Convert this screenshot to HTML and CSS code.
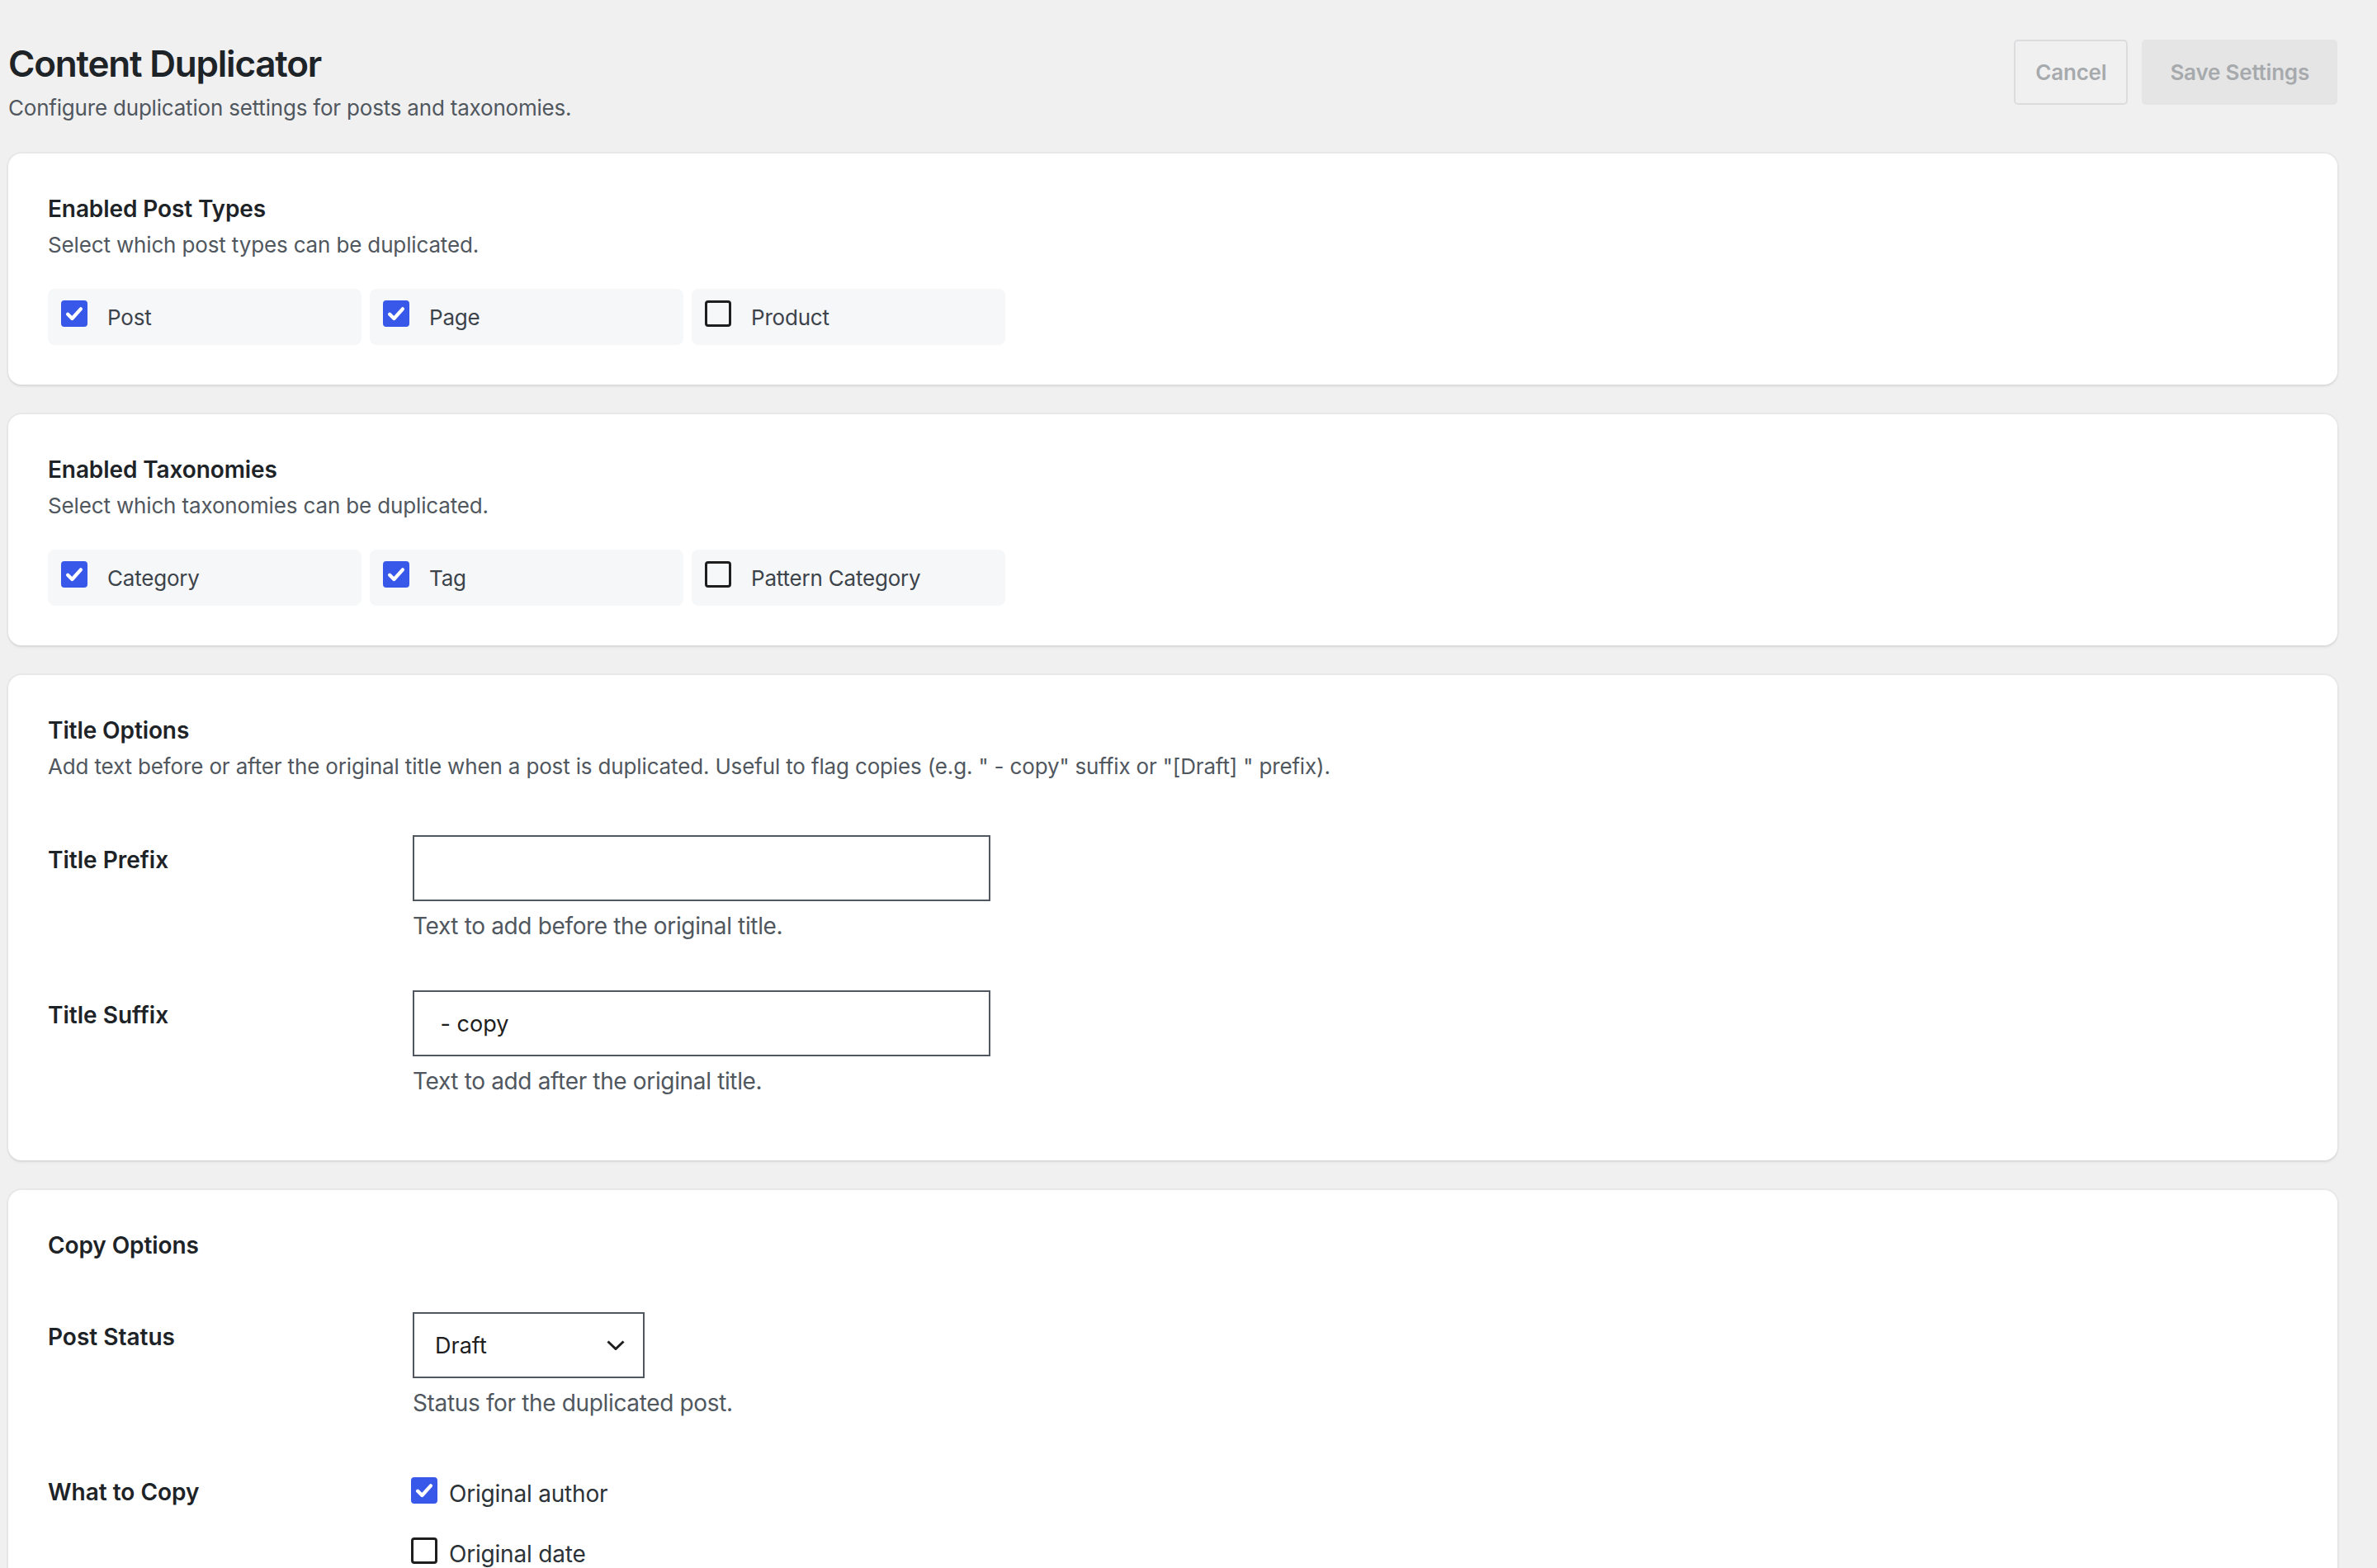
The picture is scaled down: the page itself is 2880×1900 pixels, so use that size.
FILE: index.html
```html
<!DOCTYPE html>
<html lang="en">
<head>
  <meta charset="UTF-8">
  <meta name="viewport" content="width=device-width, initial-scale=1.0">
  <title>Content Duplicator</title>
  <link rel="stylesheet" href="styles.css">
</head>
<body>
  <div class="wrap">
    <div class="page-header">
      <div>
        <h1 class="page-title">Content Duplicator</h1>
        <p class="page-desc">Configure duplication settings for posts and taxonomies.</p>
      </div>
      <div class="actions">
        <button class="btn btn-secondary" disabled>Cancel</button>
        <button class="btn btn-primary" disabled>Save Settings</button>
      </div>
    </div>

    <div class="card">
      <h2 class="card-title">Enabled Post Types</h2>
      <p class="card-desc">Select which post types can be duplicated.</p>
      <div class="choice-grid">
        <label class="choice">
          <span class="box checked"><svg viewBox="0 0 16 16"><path d="M3.8 8.4l2.8 2.8 5.6-6.2"/></svg></span>
          <span>Post</span>
        </label>
        <label class="choice">
          <span class="box checked"><svg viewBox="0 0 16 16"><path d="M3.8 8.4l2.8 2.8 5.6-6.2"/></svg></span>
          <span>Page</span>
        </label>
        <label class="choice">
          <span class="box"></span>
          <span>Product</span>
        </label>
      </div>
    </div>

    <div class="card">
      <h2 class="card-title">Enabled Taxonomies</h2>
      <p class="card-desc">Select which taxonomies can be duplicated.</p>
      <div class="choice-grid">
        <label class="choice">
          <span class="box checked"><svg viewBox="0 0 16 16"><path d="M3.8 8.4l2.8 2.8 5.6-6.2"/></svg></span>
          <span>Category</span>
        </label>
        <label class="choice">
          <span class="box checked"><svg viewBox="0 0 16 16"><path d="M3.8 8.4l2.8 2.8 5.6-6.2"/></svg></span>
          <span>Tag</span>
        </label>
        <label class="choice">
          <span class="box"></span>
          <span>Pattern Category</span>
        </label>
      </div>
    </div>

    <div class="card">
      <h2 class="card-title">Title Options</h2>
      <p class="card-desc">Add text before or after the original title when a post is duplicated. Useful to flag copies (e.g. " - copy" suffix or "[Draft] " prefix).</p>
      <div class="form-row">
        <label class="row-label">Title Prefix</label>
        <div class="row-field">
          <input class="text-input" type="text" value="">
          <p class="help">Text to add before the original title.</p>
        </div>
      </div>
      <div class="form-row">
        <label class="row-label">Title Suffix</label>
        <div class="row-field">
          <input class="text-input" type="text" value=" - copy">
          <p class="help">Text to add after the original title.</p>
        </div>
      </div>
    </div>

    <div class="card">
      <h2 class="card-title card-title-solo">Copy Options</h2>
      <div class="form-row">
        <label class="row-label">Post Status</label>
        <div class="row-field">
          <div class="select">
            <span>Draft</span>
            <svg class="chevron" viewBox="0 0 22 12"><path d="M1.5 1.5l9.5 9 9.5-9"/></svg>
          </div>
          <p class="help">Status for the duplicated post.</p>
        </div>
      </div>
      <div class="form-row">
        <label class="row-label">What to Copy</label>
        <div class="row-field">
          <label class="option">
            <span class="box checked"><svg viewBox="0 0 16 16"><path d="M3.8 8.4l2.8 2.8 5.6-6.2"/></svg></span>
            <span>Original author</span>
          </label>
          <label class="option">
            <span class="box"></span>
            <span>Original date</span>
          </label>
        </div>
      </div>
    </div>
  </div>
</body>
</html>
```

FILE: styles.css
```css
body {
  margin: 0;
  background-color: #f0f0f1;
  font-family: Inter, "Liberation Sans", sans-serif;
  color: #1d2327;
}

.wrap {
  padding: 0 48px 40px 10px;
}

.page-header {
  display: flex;
  justify-content: space-between;
  align-items: flex-start;
  padding-top: 47px;
  margin-bottom: 37px;
}

.page-title {
  margin: 0;
  font-size: 44px;
  line-height: 60px;
  font-weight: 600;
  letter-spacing: -1.2px;
  color: #1d2327;
}

.page-desc {
  margin: 6px 0 0;
  font-size: 26px;
  line-height: 36px;
  color: #50575e;
  letter-spacing: -0.2px;
}

.actions {
  display: flex;
  gap: 17px;
  padding-top: 1px;
}

.btn {
  height: 79px;
  border-radius: 5px;
  font-family: inherit;
  font-size: 26px;
  font-weight: 600;
  color: #a7aaad;
  letter-spacing: -0.2px;
}

.btn-secondary {
  padding: 0 24px;
  background: transparent;
  border: 2px solid #dcdcde;
}

.btn-primary {
  padding: 0 34px;
  background: #e5e5e6;
  border: none;
}

.card {
  background: #fff;
  border-radius: 16px;
  padding: 48px;
  margin-bottom: 36px;
  box-shadow: 0 0 0 2px rgba(0, 0, 0, 0.03), 0 3px 3px rgba(0, 0, 0, 0.05);
}

.card-title {
  margin: 0 0 6px;
  font-size: 28px;
  line-height: 39px;
  font-weight: 600;
  letter-spacing: -0.1px;
  color: #1d2327;
}

.card-title-solo {
  margin-bottom: 31px;
}

.card-desc {
  margin: 0 0 35px;
  font-size: 26px;
  line-height: 36px;
  color: #50575e;
  letter-spacing: -0.15px;
}

.choice-grid {
  display: flex;
  gap: 10px;
}

.choice {
  width: 380px;
  height: 68px;
  box-sizing: border-box;
  padding: 0 16px;
  display: flex;
  align-items: center;
  gap: 24px;
  background: #f6f7f9;
  border-radius: 8px;
  font-size: 26px;
  color: #3c434a;
  letter-spacing: -0.2px;
}

.box {
  flex: none;
  width: 32px;
  height: 32px;
  box-sizing: border-box;
  border: 3px solid #1e1e1e;
  border-radius: 4px;
  margin-top: -8px;
  display: flex;
  align-items: center;
  justify-content: center;
}

.box.checked {
  background: #3858e9;
  border-color: #3858e9;
}

.box svg {
  width: 30px;
  height: 30px;
  flex: none;
}

.box path {
  fill: none;
  stroke: #fff;
  stroke-width: 2.3;
  stroke-linecap: round;
  stroke-linejoin: round;
}

.form-row {
  display: grid;
  grid-template-columns: 442px 1fr;
  padding: 30px 0;
}

.row-label {
  padding-top: 12px;
  font-size: 28px;
  line-height: 36px;
  font-weight: 600;
  color: #1d2327;
}

.text-input {
  display: block;
  width: 700px;
  height: 80px;
  box-sizing: border-box;
  border: 2px solid #50575e;
  border-radius: 0;
  padding: 0 24px;
  font-family: inherit;
  font-size: 27px;
  color: #1e1e1e;
  background: #fff;
}

.help {
  margin: 12px 0 0;
  font-size: 28px;
  line-height: 36px;
  color: #50575e;
  letter-spacing: -0.35px;
}

.select {
  width: 281px;
  height: 80px;
  box-sizing: border-box;
  border: 2px solid #50575e;
  padding: 0 22px 0 25px;
  display: flex;
  align-items: center;
  justify-content: space-between;
  font-size: 27px;
  color: #1e1e1e;
}

.chevron {
  width: 22px;
  height: 12px;
}

.chevron path {
  fill: none;
  stroke: #1e1e1e;
  stroke-width: 3;
}

.option {
  height: 64px;
  margin-bottom: 9px;
  margin-left: -2px;
  display: flex;
  align-items: center;
  gap: 14px;
  font-size: 28px;
  color: #2c3338;
  letter-spacing: -0.2px;
}
```
